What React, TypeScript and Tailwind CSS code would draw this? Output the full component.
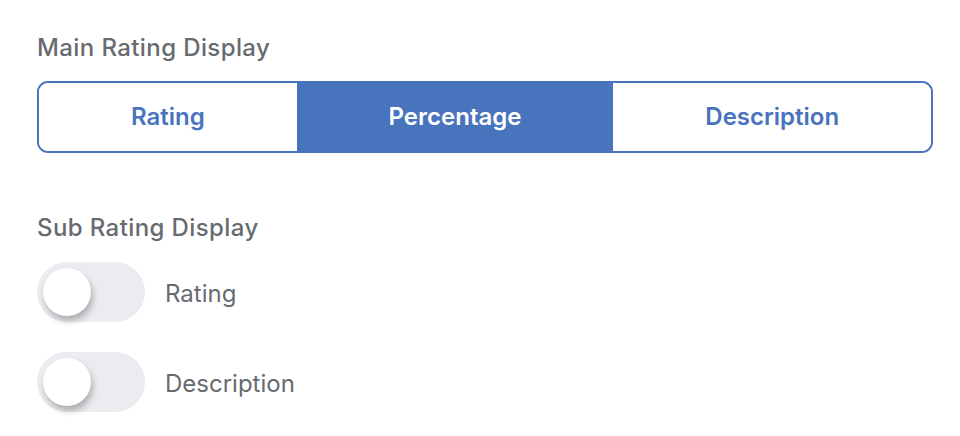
import React, { useState } from "react";

function Toggle({ label }: { label: string }) {
  const [on, setOn] = useState(false);
  return (
    <div className="flex items-center gap-5">
      <button
        onClick={() => setOn(!on)}
        className={`relative w-[108px] h-[60px] rounded-full ${on ? "bg-[#4873bd]" : "bg-[#ebebf0]"}`}
      >
        <span
          className={`absolute top-[6px] ${on ? "left-[54px]" : "left-[6px]"} w-[48px] h-[48px] rounded-full bg-white shadow-[2px_5px_6px_rgba(0,0,0,0.25)]`}
        />
      </button>
      <span className="text-[24px] leading-[30px] text-[#676b70] pt-[4px]">{label}</span>
    </div>
  );
}

export default function App() {
  const [sel, setSel] = useState("Percentage");
  const opts = ["Rating", "Percentage", "Description"];
  return (
    <div
      className="w-[960px] h-[436px] bg-white px-[37px] pt-[33px]"
      style={{ fontFamily: "Inter, 'Noto Sans', sans-serif" }}
    >
      <div className="text-[24px] font-medium tracking-[0.4px] text-[#676b70] leading-[30px]">Main Rating Display</div>
      <div className="mt-[18px] flex w-[896px] h-[72px] border-2 border-[#4873bd] rounded-[11px] overflow-hidden">
        {opts.map((o) => (
          <button
            key={o}
            onClick={() => setSel(o)}
            className={`flex-auto flex items-center justify-center text-[24px] font-semibold ${
              sel === o ? "bg-[#4873bd] text-white" : "bg-white text-[#4873bd]"
            }`}
          >
            {o}
          </button>
        ))}
      </div>
      <div className="mt-[60px] text-[24px] font-medium tracking-[0.4px] text-[#676b70] leading-[30px]">Sub Rating Display</div>
      <div className="mt-[19px] flex flex-col gap-[30px]">
        <Toggle label="Rating" />
        <Toggle label="Description" />
      </div>
    </div>
  );
}
